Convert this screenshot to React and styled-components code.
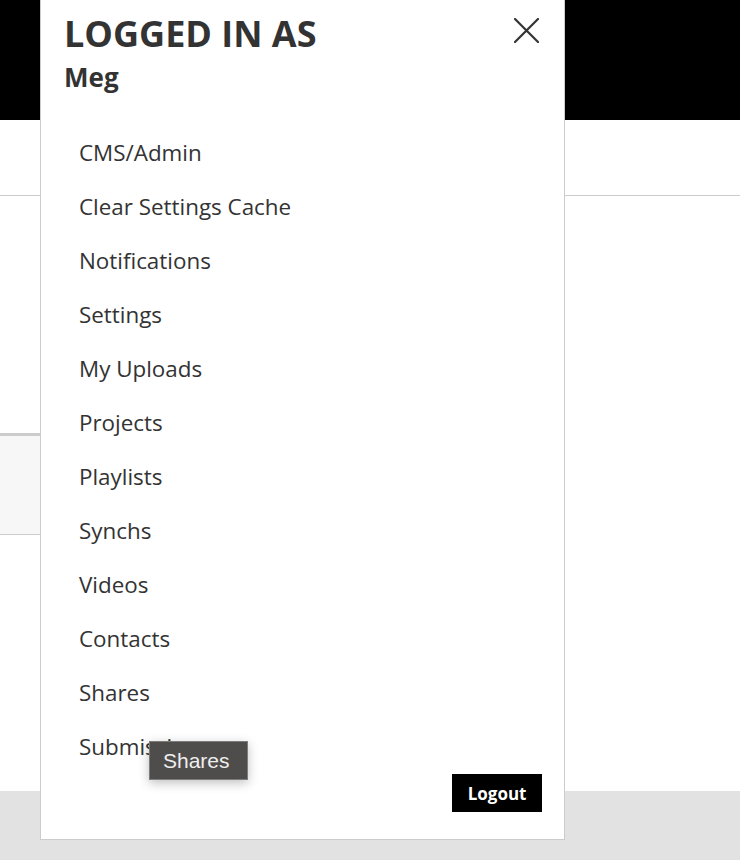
import styled, { createGlobalStyle } from 'styled-components'

const Global = createGlobalStyle`
    body {
        margin: 0;
        background: #fff;
        font-family: "Open Sans", "Liberation Sans", sans-serif;
        color: #333;
    }
`

const Page = styled.div`
    position: relative;
    width: 740px;
    height: 860px;
    overflow: hidden;
    display: flex;
    flex-direction: column;
`

const TopBar = styled.header`
    height: 120px;
    background: #000;
    flex-shrink: 0;
`

const SubNav = styled.nav`
    height: 75px;
    border-bottom: 1px solid #ccc;
    flex-shrink: 0;
`

const Content = styled.main`
    flex: 1;
    padding-top: 237px;
`

const InfoBox = styled.section`
    width: 420px;
    height: 98px;
    background: #f7f7f7;
    border-top: 3px solid #ccc;
    border-bottom: 1px solid #ccc;
`

const Footer = styled.footer`
    height: 69px;
    background: #e2e2e2;
    flex-shrink: 0;
`

const Drawer = styled.aside`
    position: absolute;
    top: 0;
    left: 40px;
    width: 523px;
    height: 839px;
    background: #fff;
    border: 1px solid #ccc;
    border-top: none;
    box-sizing: content-box;
    display: flex;
    flex-direction: column;
`

const DrawerHead = styled.div`
    display: flex;
    justify-content: space-between;
    align-items: flex-start;
    padding: 12px 22px 0 23px;
`

const Title = styled.h2`
    margin: 0;
    font-size: 36px;
    line-height: 1.2;
    font-weight: 700;
    color: #333;
`

const UserName = styled.div`
    margin-top: 7px;
    font-size: 26px;
    line-height: 1.2;
    font-weight: 700;
    color: #333;
`

const CloseButton = styled.button`
    width: 25px;
    height: 25px;
    margin: 6px 3px 0 0;
    padding: 0;
    border: none;
    background: none;
    cursor: pointer;

    & svg {
        display: block;
    }
`

const Menu = styled.ul`
    list-style: none;
    margin: 33px 0 0;
    padding: 0 0 0 38px;
`

const MenuItem = styled.li`
    font-size: 22.4px;
    line-height: 54px;
    color: #333;
    white-space: nowrap;
`

const DrawerFoot = styled.div`
    display: flex;
    justify-content: flex-end;
    padding: 0 22px 0 0;
`

const LogoutButton = styled.button`
    height: 38px;
    padding: 0 15.5px;
    background: #000;
    color: #fff;
    border: none;
    font-family: "Open Sans", sans-serif;
    font-weight: 700;
    font-size: 17px;
    cursor: pointer;
`

const Tooltip = styled.div`
    position: absolute;
    left: 149px;
    top: 741px;
    width: 97px;
    height: 37px;
    box-sizing: content-box;
    display: flex;
    align-items: center;
    background: #4f4d4b;
    border: 1px solid #7c7c7c;
    box-shadow: 0 3px 10px rgba(0, 0, 0, 0.25);
    color: #eee;
    font-family: "Liberation Sans", Arial, sans-serif;
    font-size: 21px;

    & span {
        margin-left: 13px;
    }
`

const items = [
    'CMS/Admin',
    'Clear Settings Cache',
    'Notifications',
    'Settings',
    'My Uploads',
    'Projects',
    'Playlists',
    'Synchs',
    'Videos',
    'Contacts',
    'Shares',
    'Submissions',
]

export default function App() {
    return (
        <Page>
            <Global />
            <TopBar />
            <SubNav />
            <Content>
                <InfoBox />
            </Content>
            <Footer />

            <Drawer>
                <DrawerHead>
                    <div>
                        <Title>LOGGED IN AS</Title>
                        <UserName>Meg</UserName>
                    </div>
                    <CloseButton aria-label="Close">
                        <svg width="25" height="25" viewBox="0 0 25 25">
                            <path d="M1 1 L24 24 M24 1 L1 24" stroke="#333" strokeWidth="2.2" strokeLinecap="round" fill="none" />
                        </svg>
                    </CloseButton>
                </DrawerHead>
                <Menu>
                    {items.map(i => <MenuItem key={i}>{i}</MenuItem>)}
                </Menu>
                <DrawerFoot>
                    <LogoutButton>Logout</LogoutButton>
                </DrawerFoot>
            </Drawer>

            <Tooltip><span>Shares</span></Tooltip>
        </Page>
    )
}
